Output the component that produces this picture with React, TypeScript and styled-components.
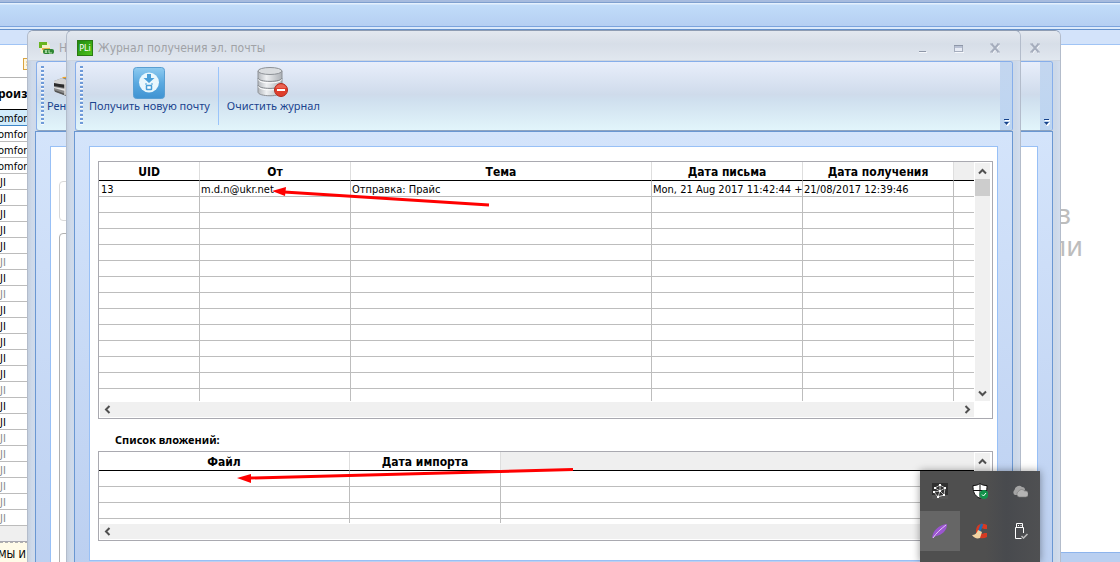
import React from 'react';
import styled, { createGlobalStyle } from 'styled-components';

const ui = `"DejaVu Sans Condensed", "DejaVu Sans", sans-serif`;
const smooth = `"Noto Sans", "Open Sans", sans-serif`;

const GlobalStyle = createGlobalStyle`
  * { box-sizing: border-box; }
  body { margin: 0; font: 11px/16px "Noto Sans", sans-serif; color: #000; overflow: hidden; }
  button { font: inherit; color: inherit; background: none; border: 0; padding: 0; margin: 0; }
  svg { display: block; }
`;

const Desktop = styled.div`
  position: relative;
  display: flex;
  flex-direction: column;
  height: 100vh;
  overflow: hidden;
  background: #fff;
`;

const Ribbon = styled.header`
  flex: none;
  height: 30px;
  padding-top: 2px;
  background: #a6bbde;
  border-bottom: 1px solid #6391cc;
`;

const RibbonBand = styled.div`
  height: 25px;
  border-top: 1px solid #7e9fce;
  border-bottom: 1px solid #7ba3dc;
  background: linear-gradient(#e4f0fd 0 1px, #c1dcf9 2px, #b5cff2);
`;

const RibbonEdge = styled.div`
  height: 2px;
  background: #dceafb;
`;

const DocTop = styled.div`
  flex: none;
  height: 15px;
  background: #d3e3fa;
  border-bottom: 1px solid #a0c4f5;
`;

const DocBody = styled.main`
  flex: 1;
  min-height: 0;
  display: flex;
`;

const DocPage = styled.div`
  flex: 1;
  display: flex;
  flex-direction: column;
  justify-content: space-between;
`;

const DocBottom = styled.footer`
  flex: none;
  height: 10px;
  border-top: 1px solid #8db4ec;
  background: #b9cff0;
`;

const Catalog = styled.section`
  width: 28px;
  overflow: hidden;
  white-space: nowrap;
  background: #fff;
`;

const CatalogTools = styled.div`
  height: 33px;
  padding: 13px 0 0 23px;
  border-bottom: 1px solid #b4b4b4;
`;

const CatalogTable = styled.table`
  width: 28px;
  table-layout: fixed;
  border-collapse: separate;
  border-spacing: 0;
  font: 11px/13px ${ui};

  th {
    height: 32px;
    padding: 0;
    border-bottom: 1px solid #000;
    font: bold 12px/30px ${smooth};
    text-align: left;
    text-indent: -2px;
  }
`;

const CatalogCell = styled.td<{ $dim?: boolean; $active?: boolean; $clipped?: boolean }>`
  height: 16px;
  padding: 2px 0 0;
  overflow: hidden;
  border-bottom: 1px solid ${p => (p.$active ? '#3f87c8' : '#bcbcbc')};
  background: ${p => (p.$active ? '#d2ecfb' : '#fff')};
  color: ${p => (p.$dim ? '#8a8a8a' : '#000')};
  text-indent: ${p => (p.$clipped ? '-2px' : '0')};
`;

const CatalogScroll = styled.div`
  height: 16px;
  background: #efefef;
  border-bottom: 1px solid #a8a8b0;
`;

const CatalogNote = styled.div`
  height: 22px;
  border-top: 1px dashed #b0b0b0;
  background: #fffbe8;
  font: 11px/24px ${ui};
  text-indent: -2px;
`;

const Watermark = styled.p`
  margin: 153px 37px 0 0;
  font: 27px/32px ${smooth};
  color: #bdbdbd;
  text-align: right;

  span { display: block; padding-right: 12px; }
`;

const Win = styled.section<{ $left: number; $right: number; $bottom: number }>`
  position: absolute;
  top: 30px;
  bottom: ${p => p.$bottom}px;
  left: ${p => p.$left}px;
  right: ${p => p.$right}px;
  display: flex;
  flex-direction: column;
  overflow: hidden;
  border: 1px solid #b3bccb;
  border-top-color: #8f9db3;
  border-radius: 6px 6px 0 0;
  background: linear-gradient(90deg, #c3cfdf, #cfdaea 4px, #cdd9e9 calc(100% - 4px), #d3deee);
`;

const TitleBar = styled.div`
  flex: none;
  display: flex;
  align-items: center;
  height: 30px;
  padding: 4px 17px 0 10px;
  border-bottom: 1px solid #cdd5e0;
  background: linear-gradient(#e3e8ef, #d7dee8 45%, #e1e7ef);
`;

const Title = styled.h1`
  flex: 1;
  min-width: 0;
  margin: 0 0 0 5px;
  overflow: hidden;
  white-space: nowrap;
  font: 12px/18px ${ui};
  color: #a0a2a6;
`;

const AppBadge = styled.span`
  width: 16px;
  height: 16px;
  border: 1px solid #2a7a14;
  background: linear-gradient(135deg, #1f8a12, #4fc31b);
  font: 9px/14px ${ui};
  color: #fff;
  text-align: center;
`;

const Controls = styled.div`
  display: flex;
  gap: 20px;

  button { width: 16px; height: 16px; }
`;

const Toolbar = styled.div`
  flex: none;
  display: flex;
  height: 70px;
  margin: 0 7px 0 8px;
  overflow: hidden;
  border: 1px solid #86aeea;
  border-bottom-color: #8ea3bf;
  border-radius: 3px;
  background: linear-gradient(#e8eefb, #cfdbeb 48%, #cfdfee 55%, #e2f5fb);
`;

const Grip = styled.div`
  flex: none;
  width: 3px;
  height: 59px;
  margin: 4px 0 0 4px;
  background: repeating-linear-gradient(#6f9ad8 0 2px, #f8fbff 2px 3px, transparent 3px 4px);
`;

const ToolButton = styled.button<{ $tight?: boolean }>`
  display: flex;
  flex-direction: column;
  align-items: center;
  min-width: 50px;
  height: 62px;
  padding: 5px ${p => (p.$tight ? 3 : 6)}px 0;
  font: 11px/14px ${smooth};
  white-space: nowrap;
  color: #1b448f;

  span { width: 100%; text-align: left; }
`;

const ToolDivider = styled.div`
  flex: none;
  width: 1px;
  height: 58px;
  margin: 5px 2px 0;
  background: #9ac4fa;
`;

const ToolOverflow = styled.button`
  flex: none;
  display: flex;
  align-items: flex-end;
  width: 12px;
  margin-left: auto;
  padding: 0 0 4px 3px;
  background: linear-gradient(#c3d6ef, #bdd5f1);
`;

const Client = styled.div`
  flex: 1;
  display: flex;
  flex-direction: column;
  margin: 0 7px;
  padding: 14px;
  border: 1px solid #6a97d2;
  border-bottom: 0;
  background: linear-gradient(#d4e4fb, #bbcff0);
`;

const Panel = styled.div`
  flex: 1;
  padding: 14px 4px 0 8px;
  border: 1px solid #98c0f6;
  background: #fff;
`;

const BackPanel = styled(Panel)`
  display: flex;
  flex-direction: column;
  gap: 12px;
  padding: 34px 40px 0 8px;
`;

const GroupBox = styled.div<{ $tall?: boolean }>`
  flex: ${p => (p.$tall ? '1' : 'none')};
  height: ${p => (p.$tall ? 'auto' : '40px')};
  border: 1px solid ${p => (p.$tall ? '#b0b0b0' : '#d8d8d8')};
  border-radius: 4px;
`;

const GridFrame = styled.div<{ $body: number }>`
  display: grid;
  grid-template-columns: minmax(0, 1fr) 15px;
  grid-template-rows: ${p => p.$body}px 15px;
  column-gap: 1px;
  row-gap: 1px;
  padding: 0 2px 1px 0;
  border: 1px solid #a9a9b0;
  background: #fff;
`;

const GridView = styled.div`
  overflow: hidden;
`;

const DataTable = styled.table`
  width: 100%;
  table-layout: fixed;
  border-collapse: separate;
  border-spacing: 0;

  th, td {
    overflow: hidden;
    white-space: nowrap;
    border-right: 1px solid #bdbdbd;
  }
  th {
    height: 19px;
    padding: 2px 0 0;
    border-right-color: #dedede;
    border-bottom: 1px solid #000;
    font: bold 12px/16px ${ui};
    text-align: center;
  }
  td {
    height: 16px;
    padding: 2px 0 0 1px;
    border-bottom: 1px solid #bdbdbd;
    font: 11px/13px ${ui};
  }
  td:first-child { padding-left: 2px; }
  th:last-child, td:last-child { border-right: 0; }
  th:last-child { background: #efefef; }
`;

const VScroll = styled.div`
  display: flex;
  flex-direction: column;
  margin-top: 1px;
  overflow: hidden;
  background: #f0f0f0;

  button { display: flex; align-items: center; justify-content: center; flex: none; height: 16px; }
  button:last-child { margin-top: auto; }
`;

const Thumb = styled.div`
  flex: none;
  height: 17px;
  background: #cdcdcd;
`;

const HScroll = styled.div`
  display: flex;
  justify-content: space-between;
  margin-left: 1px;
  background: #f0f0f0;

  button { display: flex; align-items: center; justify-content: center; width: 14px; }
`;

const SectionTitle = styled.h2`
  margin: 0;
  padding: 13px 0 3px 17px;
  font: bold 11px/16px ${smooth};
`;

const Tray = styled.aside`
  position: absolute;
  right: 80px;
  bottom: 0;
  display: grid;
  grid-template-columns: repeat(3, 40px);
  grid-auto-rows: 40px;
  padding-bottom: 11px;
  background: linear-gradient(90deg, #4f4f4f 55%, #484a4e 72%, #4f5052);
  box-shadow: 0 0 8px rgba(0, 0, 0, 0.4);
`;

const TrayButton = styled.button<{ $active?: boolean }>`
  display: flex;
  align-items: center;
  justify-content: center;
  background: ${p => (p.$active ? '#666' : 'transparent')};
`;

const Marks = styled.svg`
  position: absolute;
  top: 0;
  left: 0;
  pointer-events: none;
`;

type Dir = 'up' | 'down' | 'left' | 'right';
const turn: Record<Dir, number> = { up: 0, right: 90, down: 180, left: 270 };

const Chevron = ({ dir }: { dir: Dir }) => (
  <svg width="9" height="9" viewBox="0 0 9 9">
    <path d="M1 6.5 4.5 3 8 6.5" fill="none" stroke="#505050" strokeWidth="2" transform={`rotate(${turn[dir]} 4.5 4.5)`} />
  </svg>
);

const CloseIcon = () => (
  <svg width="16" height="16" viewBox="0 0 16 16">
    <path d="m5 5 7 8M12 5l-7 8" stroke="#f5f7fb" strokeWidth="2" />
    <path d="m4.5 4 7 8M11.5 4l-7 8" stroke="#a5adbd" strokeWidth="2" />
    <path d="M3 4h3M10 4h3M3 12h3M10 12h3" stroke="#a5adbd" />
  </svg>
);

const OverflowIcon = () => (
  <svg width="7" height="8" viewBox="0 0 7 8">
    <path d="M2 2.5h5M2 5h5L4.5 8z" stroke="#fff" fill="#fff" />
    <path d="M1 1.5h5" stroke="#15428b" />
    <path d="M1 4h5L3.500 7z" fill="#15428b" />
  </svg>
);

const ReceiveIcon = () => (
  <svg width="32" height="32" viewBox="0 0 32 32">
    <defs>
      <linearGradient id="recv" x1="0" y1="0" x2="0" y2="1">
        <stop offset="0" stopColor="#8fcbf0" />
        <stop offset="0.5" stopColor="#5aa9e0" />
        <stop offset="1" stopColor="#3f93d2" />
      </linearGradient>
    </defs>
    <rect x="0.500" y="0.500" width="31" height="31" rx="3" fill="url(#recv)" stroke="#5a9fd2" />
    <circle cx="16" cy="15.500" r="10" fill="#e9f7fd" />
    <path d="M14 7h4v4h3.500L16 16l-5.500-5H14z" fill="#4a9fd8" />
    <rect x="13.500" y="18.500" width="5" height="4" rx="0.500" fill="#fff" stroke="#4a9fd8" strokeWidth="1.500" />
    <path d="M12 17h2M18 17h2" stroke="#4a9fd8" />
  </svg>
);

const ClearIcon = () => (
  <svg width="32" height="32" viewBox="0 0 32 32">
    <defs>
      <linearGradient id="disk" x1="0" x2="1">
        <stop offset="0" stopColor="#b4b8bd" />
        <stop offset="0.35" stopColor="#eef0f2" />
        <stop offset="1" stopColor="#acb0b5" />
      </linearGradient>
    </defs>
    <path d="M1 4v21c0 5 24 5 24 0V4z" fill="url(#disk)" stroke="#8d9196" />
    <ellipse cx="13" cy="4" rx="12" ry="3.500" fill="#d9dcdf" stroke="#8d9196" />
    <path d="M1 11c0 4.500 24 4.500 24 0M1 18c0 4.500 24 4.500 24 0" fill="none" stroke="#84888d" />
    <path d="M1.500 12.500c0 4.500 23 4.500 23 0M1.500 19.500c0 4.500 23 4.500 23 0" fill="none" stroke="#fff" />
    <circle cx="24" cy="23" r="6.500" fill="#df3e2c" stroke="#b42a1c" />
    <path d="M18.500 21c2-5 9-5 11 0z" fill="#ee7464" opacity="0.7" />
    <path d="M20 23h8" stroke="#fff" strokeWidth="2.200" />
  </svg>
);

const RendererIcon = () => (
  <svg width="32" height="32" viewBox="0 0 32 32">
    <path d="m7 13 3-3 16-1 2 4z" fill="#f5a51c" />
    <path d="M1 14 9 11h19v13l-14 5-13-5z" fill="#8a8a8a" />
    <path d="m1 14 8-3 7 3-4 3H1z" fill="#d3d3d3" />
    <path d="m1 16 11 2v3L1 19z" fill="#2b2b2b" />
    <path d="m1 21 11 3v-2L1 20z" fill="#e4e4e4" />
    <path d="m2 24 11 4" stroke="#555" strokeWidth="1.500" />
    <path d="M12 16v12" stroke="#dadada" strokeWidth="1.500" />
  </svg>
);

const SheetIcon = () => (
  <svg width="16" height="16" viewBox="0 0 16 16">
    <path d="M1 2h8l3 3v8H3z" fill="#f4f1c8" />
    <path d="M1 2h8v3H4v3H1z" fill="#69b51f" />
    <path d="M4 9h8" stroke="#e8b34b" strokeWidth="2" />
    <rect x="5" y="9" width="11" height="5" rx="2" fill="#2e8633" />
    <path d="m7 10 2 3m0-3-2 3m4-3v3h3" stroke="#bfe6b8" fill="none" />
  </svg>
);

const NoteIcon = () => (
  <svg width="12" height="12" viewBox="0 0 12 12">
    <rect x="0.500" y="0.500" width="11" height="11" fill="#fff7df" stroke="#d9a441" />
    <path d="M3 4h7M3 7h7" stroke="#e2b460" />
  </svg>
);

const WindowControls = ({ closeOnly }: { closeOnly?: boolean }) => (
  <Controls>
    {!closeOnly && (
      <>
        <button aria-label="Свернуть">
          <svg width="16" height="16" viewBox="0 0 16 16">
            <path d="M4 12.500h8" stroke="#f5f7fb" />
            <path d="M4 11.500h7" stroke="#8e97a8" strokeWidth="1" />
          </svg>
        </button>
        <button aria-label="Развернуть">
          <svg width="16" height="16" viewBox="0 0 16 16">
            <path d="M4 12.500h9" stroke="#f5f7fb" />
            <rect x="3.500" y="5.500" width="8" height="6" fill="#e7ebf4" stroke="#a5adbd" />
            <path d="M3 5.500h9" stroke="#8e97a8" />
            <path d="M4 7h7" stroke="#b9c1d4" strokeWidth="2" />
          </svg>
        </button>
      </>
    )}
    <button aria-label="Закрыть"><CloseIcon /></button>
  </Controls>
);

type GridProps = { columns: { name: string; width: number }[]; rows: string[][]; body: number; thumb?: boolean };

const DataGrid = ({ columns, rows, body, thumb }: GridProps) => (
  <GridFrame $body={body}>
    <GridView>
      <DataTable>
        <colgroup>
          {columns.map(c => <col key={c.name} width={c.width} />)}
          <col />
        </colgroup>
        <thead>
          <tr>{columns.map(c => <th key={c.name} scope="col">{c.name}</th>)}<th /></tr>
        </thead>
        <tbody>
          {rows.map((row, i) => (
            <tr key={i}>{columns.map((c, j) => <td key={c.name}>{row[j]}</td>)}<td /></tr>
          ))}
        </tbody>
      </DataTable>
    </GridView>
    <VScroll>
      <button aria-label="Вверх"><Chevron dir="up" /></button>
      {thumb && <Thumb />}
      <button aria-label="Вниз"><Chevron dir="down" /></button>
    </VScroll>
    <HScroll>
      <button aria-label="Влево"><Chevron dir="left" /></button>
      <button aria-label="Вправо"><Chevron dir="right" /></button>
    </HScroll>
  </GridFrame>
);

const mailColumns = [
  { name: 'UID', width: 101 },
  { name: 'От', width: 151 },
  { name: 'Тема', width: 301 },
  { name: 'Дата письма', width: 151 },
  { name: 'Дата получения', width: 151 },
];
const blank = (n: number): string[][] => Array.from({ length: n }, () => []);
const mailRows = [
  ['13', 'm.d.n@ukr.net', 'Отправка: Прайс', 'Mon, 21 Aug 2017 11:42:44 +0', '21/08/2017 12:39:46'],
  ...blank(13),
];
const fileColumns = [
  { name: 'Файл', width: 251 },
  { name: 'Дата импорта', width: 151 },
];

const dimRows = [5, 7, 13, 16, 17, 18, 19, 20, 21];

export default function App() {
  return (
    <Desktop>
      <GlobalStyle />
      <Ribbon>
        <RibbonBand />
        <RibbonEdge />
      </Ribbon>
      <DocTop />
      <DocBody>
        <Catalog>
          <CatalogTools><NoteIcon /></CatalogTools>
          <CatalogTable>
            <thead><tr><th scope="col">роиз</th></tr></thead>
            <tbody>
              {[0, 1, 2, 3].map(i => <tr key={i}><CatalogCell $clipped $active={i === 0}>omfor</CatalogCell></tr>)}
              {Array.from({ length: 22 }, (_, i) => (
                <tr key={i}><CatalogCell $dim={dimRows.includes(i)}>JI</CatalogCell></tr>
              ))}
            </tbody>
          </CatalogTable>
          <CatalogScroll />
          <CatalogNote>МЫ И</CatalogNote>
        </Catalog>
        <DocPage>
          <Watermark><span>в</span>ли</Watermark>
          <DocBottom />
        </DocPage>
      </DocBody>

      <Win $left={27} $right={59} $bottom={-40}>
        <TitleBar>
          <SheetIcon />
          <Title>Н</Title>
          <WindowControls closeOnly />
        </TitleBar>
        <Toolbar>
          <Grip />
          <ToolButton $tight><RendererIcon /><span>Рен</span></ToolButton>
          <ToolOverflow aria-label="Ещё"><OverflowIcon /></ToolOverflow>
        </Toolbar>
        <Client>
          <BackPanel>
            <GroupBox />
            <GroupBox $tall />
          </BackPanel>
        </Client>
      </Win>

      <Win $left={66} $right={99} $bottom={-14}>
        <TitleBar>
          <AppBadge>PLi</AppBadge>
          <Title>Журнал получения эл. почты</Title>
          <WindowControls />
        </TitleBar>
        <Toolbar>
          <Grip />
          <ToolButton><ReceiveIcon /><span>Получить новую почту</span></ToolButton>
          <ToolDivider />
          <ToolButton><ClearIcon /><span>Очистить журнал</span></ToolButton>
          <ToolOverflow aria-label="Ещё"><OverflowIcon /></ToolOverflow>
        </Toolbar>
        <Client>
          <Panel>
            <DataGrid columns={mailColumns} rows={mailRows} body={239} thumb />
            <SectionTitle>Список вложений:</SectionTitle>
            <DataGrid columns={fileColumns} rows={blank(4)} body={71} />
          </Panel>
        </Client>
      </Win>

      <Tray>
        <TrayButton aria-label="Сеть">
          <svg width="16" height="16" viewBox="0 0 16 16">
            <rect width="16" height="16" fill="#303030" />
            <path d="M0 12h16v4H0z" fill="#555" />
            <path d="m3 5 5-3 5 3-1 7-6 2-4-5 6-1 5-3M8 2v6l4 4M3 5l5 3-2 6" fill="none" stroke="#d8d8d8" strokeWidth="0.800" />
            <path d="M7 1h2v2H7zM12 4h2v2h-2zM2 4h2v2H2zM7 7h2v2H7zM11 11h2v2h-2zM5 13h2v2H5zM1 8h2v2H1z" fill="#fff" />
          </svg>
        </TrayButton>
        <TrayButton aria-label="Защитник">
          <svg width="16" height="16" viewBox="0 0 16 16">
            <path d="M8 0.500c2 1.500 4 2 7 2 0 6-1 10-7 13C2 12.500 1 8.500 1 2.500c3 0 5-.5 7-2z" fill="#fff" stroke="#111" />
            <path d="M8 1v14M1.500 7.500h13" stroke="#111" />
            <circle cx="12" cy="11.500" r="4.500" fill="#12924a" />
            <path d="m10 11.500 1.500 1.500 2.500-3" stroke="#fff" fill="none" />
          </svg>
        </TrayButton>
        <TrayButton aria-label="Облако">
          <svg width="16" height="16" viewBox="0 0 16 16">
            <path d="M3 12a3 3 0 0 1-.5-5A4.500 4.500 0 0 1 10 4a3 3 0 0 1 3 3l-5 5z" fill="#a4a4a4" />
            <path d="M7 14a3 3 0 0 1-.5-5.500A3.500 3.500 0 0 1 12.500 8 3 3 0 0 1 14 14z" fill="#b4b4b4" stroke="#777" strokeWidth="0.600" />
          </svg>
        </TrayButton>
        <TrayButton $active aria-label="Перо">
          <svg width="16" height="16" viewBox="0 0 16 16">
            <path d="M0 15C1 7 7 2 15 1c0 7-5 11-11 12z" fill="#9a55cf" />
            <path d="M1 15C4 10 9 6 14 2" stroke="#e3c8f5" fill="none" />
          </svg>
        </TrayButton>
        <TrayButton aria-label="Очистка">
          <svg width="16" height="16" viewBox="0 0 16 16">
            <path d="M15 2v4h-3c-2-2-4 0-4 2s2 4 4 2h3v4c-5 3-11 1-11-6s6-9 11-6z" fill="#d63a22" />
            <path d="M10 1 7 9" stroke="#1c6fb8" strokeWidth="2.500" />
            <path d="m6 7 4 2-2 6c-3 1-6 0-8-3 3 0 5-2 6-5z" fill="#f2d3a2" />
          </svg>
        </TrayButton>
        <TrayButton aria-label="USB">
          <svg width="16" height="16" viewBox="0 0 16 16" fill="none" stroke="#fff">
            <path d="M4.500 4.500v-4h6v4M11.500 10V4.500h-8v11h6M6 2.500h1M8.500 2.500h1" />
            <path d="m9.500 13 2 2 4-4" stroke="#bbb" strokeWidth="1.500" />
          </svg>
        </TrayButton>
      </Tray>

      <Marks width="600" height="500" viewBox="0 0 600 500" aria-hidden="true">
        <g stroke="#f00" strokeWidth="3" fill="#f00">
          <path d="M489 205 284 192M573 469.500 250 478" />
          <path d="m272 191 14-4-1 9zM237 478l14-4v9z" strokeWidth="0" />
        </g>
      </Marks>
    </Desktop>
  );
}
